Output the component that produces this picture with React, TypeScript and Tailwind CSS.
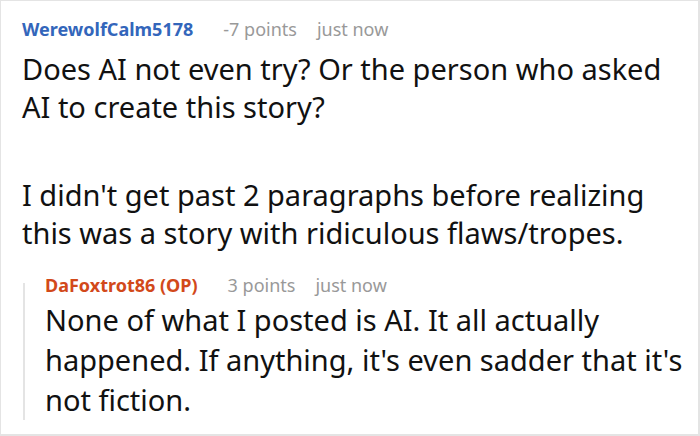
export default function App() {
  return (
    <div className="w-[700px] h-[436px] bg-white border-t border-l border-r-2 border-b-2 border-[#e4e4e4] overflow-hidden font-['Noto_Sans',sans-serif]">
      <div className="pl-[21px] pr-[8px] pt-[15px]">
        <div className="flex items-baseline text-[18px] leading-[26px]">
          <span className="font-bold text-[#3366bb]">WerewolfCalm5178</span>
          <span className="ml-[30px] text-[#999999]">-7 points</span>
          <span className="ml-[20px] text-[#999999]">just now</span>
        </div>
        <div className="mt-[8px] text-[29px] leading-[38px] text-[#111111]">
          <p>Does AI not even try? Or the person who asked AI to create this story?</p>
          <p className="mt-[50px]">I didn't get past 2 paragraphs before realizing this was a story with ridiculous flaws/tropes.</p>
        </div>
        <div className="mt-[31px] ml-[1px] flex flex-col border-l-2 border-[#e4e4e4] pl-[20px]">
          <div className="-mt-[11px] flex items-baseline text-[18px] leading-[26px]">
            <span className="font-bold text-[#d2491a]">DaFoxtrot86 (OP)</span>
            <span className="ml-[30px] text-[#999999]">3 points</span>
            <span className="ml-[20px] text-[#999999]">just now</span>
          </div>
          <div className="mt-[2px] text-[29px] leading-[40px] text-[#111111]">
            <p>None of what I posted is AI. It all actually happened. If anything, it's even sadder that it's not fiction.</p>
          </div>
        </div>
      </div>
    </div>
  );
}
